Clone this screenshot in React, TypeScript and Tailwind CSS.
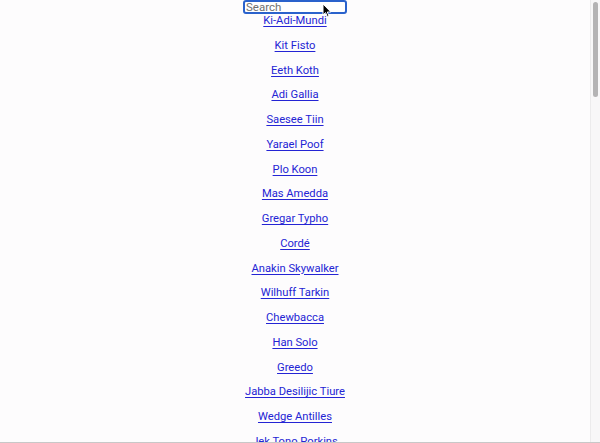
const people = [
  'Ki-Adi-Mundi',
  'Kit Fisto',
  'Eeth Koth',
  'Adi Gallia',
  'Saesee Tiin',
  'Yarael Poof',
  'Plo Koon',
  'Mas Amedda',
  'Gregar Typho',
  'Cordé',
  'Anakin Skywalker',
  'Wilhuff Tarkin',
  'Chewbacca',
  'Han Solo',
  'Greedo',
  'Jabba Desilijic Tiure',
  'Wedge Antilles',
  'Jek Tono Porkins',
  'Yoda',
];

const Cursor = () => (
  <svg
    className="absolute left-[322px] top-[3px]"
    width="10"
    height="15"
    viewBox="0 0 10 15"
  >
    <path
      d="M1 1 L1 12 L3.6 9.6 L5.4 13.8 L7 13.1 L5.3 9 L8.8 9 Z"
      fill="#000"
      stroke="#fff"
      strokeWidth="1"
      strokeLinejoin="round"
    />
  </svg>
);

export default function App() {
  return (
    <div className="relative flex h-[443px] w-[600px] overflow-hidden border-b border-[#c8c8c8] bg-[#fdfcfd] font-['Roboto','Liberation_Sans',Arial,sans-serif]">
      <div className="flex flex-1 flex-col items-center">
        <input
          placeholder="Search"
          className="h-[14px] w-[104px] rounded-[3px] border-2 border-[#2a62cc] bg-white px-[1px] text-[11.5px] leading-[10px] text-black outline-none placeholder:text-[#707070]"
        />
        <ul className="flex flex-col items-center gap-[10.75px]">
          {people.map((name) => (
            <li key={name} className="h-[14px] text-[11.2px] leading-[14px]">
              <a href="#" className="text-[#2424d4] underline decoration-[0.8px] underline-offset-[2px]">
                {name}
              </a>
            </li>
          ))}
        </ul>
      </div>
      <div className="flex w-[10px] flex-col border-l border-[#ecebec] bg-[#f8f7f8] px-[2px] pt-[2px]">
        <div className="h-[95px] w-[5px] rounded-full bg-[#b4b3b4]" />
      </div>
      <Cursor />
    </div>
  );
}
